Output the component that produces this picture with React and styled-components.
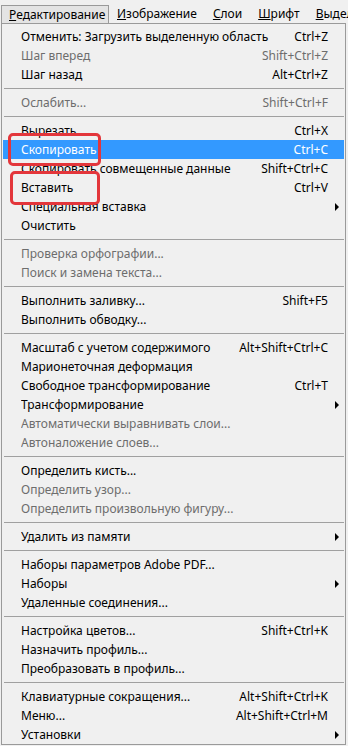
import React from 'react'
import styled, { createGlobalStyle } from 'styled-components'

const GlobalStyle = createGlobalStyle`
  body {
    margin: 0;
    background: #f0f0f0;
    font-family: "Noto Sans", "Open Sans", sans-serif;
    font-size: 12px;
    color: #000;
  }
`

const Page = styled.div`
  width: 348px;
  height: 746px;
  overflow: hidden;
  position: relative;
`

const MenuBar = styled.div`
  display: flex;
  align-items: flex-end;
  height: 23px;
  padding-left: 1px;
  white-space: nowrap;
  overflow: hidden;
`

const BarItem = styled.div`
  flex: none;
  height: 18px;
  line-height: 18px;
  padding: 0 8px;
  box-sizing: border-box;
  ${p => p.$open && `
    width: 108px;
    background: #e4e4e4;
    border: 1px solid #9a9a9a;
    border-bottom: none;
    line-height: 17px;
    padding: 0 7px;
  `}
`

const Panel = styled.div`
  position: relative;
  margin-left: 1px;
  width: 345px;
  box-sizing: border-box;
  border: 1px solid #9a9a9a;
  background: #f0f0f0;
  padding: 3px 0 0;
`

const Row = styled.div`
  display: grid;
  grid-template-columns: 1fr auto 16px;
  align-items: center;
  height: 19px;
  padding-left: 18px;
  margin: 0 1px;
  white-space: nowrap;
  color: ${p => (p.$active ? '#fff' : p.$disabled ? '#6d6d6d' : '#000')};
  background: ${p => (p.$active ? '#3399ff' : 'transparent')};
`

const Label = styled.span`
  overflow: hidden;
`

const Shortcut = styled.span`
  text-align: right;
`

const Arrow = styled.span`
  justify-self: center;
  width: 0;
  height: 0;
  border-top: 4px solid transparent;
  border-bottom: 4px solid transparent;
  border-left: 4px solid #000;
  margin-left: 1px;
`

const Separator = styled.div`
  height: 9px;
  display: flex;
  align-items: center;
  padding: 0 1px 0 2px;

  &::after {
    content: '';
    flex: 1;
    height: 1px;
    background: #a0a0a0;
  }
`

const Callout = styled.div`
  position: absolute;
  left: ${p => p.$x}px;
  top: ${p => p.$y}px;
  width: ${p => p.$w}px;
  height: ${p => p.$h}px;
  border: 3px solid #e3363b;
  border-radius: 5px;
  box-sizing: border-box;
`

const bar = ['Редактирование', 'Изображение', 'Слои', 'Шрифт', 'Выделение']

const items = [
  { t: 'Отменить: Загрузить выделенную область', k: 'Ctrl+Z' },
  { t: 'Шаг вперед', k: 'Shift+Ctrl+Z', off: true },
  { t: 'Шаг назад', k: 'Alt+Ctrl+Z' },
  '-',
  { t: 'Ослабить...', k: 'Shift+Ctrl+F', off: true },
  '-',
  { t: 'Вырезать', k: 'Ctrl+X' },
  { t: 'Скопировать', k: 'Ctrl+C', on: true },
  { t: 'Скопировать совмещенные данные', k: 'Shift+Ctrl+C' },
  { t: 'Вставить', k: 'Ctrl+V' },
  { t: 'Специальная вставка', sub: true },
  { t: 'Очистить' },
  '-',
  { t: 'Проверка орфографии...', off: true },
  { t: 'Поиск и замена текста...', off: true },
  '-',
  { t: 'Выполнить заливку...', k: 'Shift+F5' },
  { t: 'Выполнить обводку...' },
  '-',
  { t: 'Масштаб с учетом содержимого', k: 'Alt+Shift+Ctrl+C' },
  { t: 'Марионеточная деформация' },
  { t: 'Свободное трансформирование', k: 'Ctrl+T' },
  { t: 'Трансформирование', sub: true },
  { t: 'Автоматически выравнивать слои...', off: true },
  { t: 'Автоналожение слоев...', off: true },
  '-',
  { t: 'Определить кисть...' },
  { t: 'Определить узор...', off: true },
  { t: 'Определить произвольную фигуру...', off: true },
  '-',
  { t: 'Удалить из памяти', sub: true },
  '-',
  { t: 'Наборы параметров Adobe PDF...' },
  { t: 'Наборы', sub: true },
  { t: 'Удаленные соединения...' },
  '-',
  { t: 'Настройка цветов...', k: 'Shift+Ctrl+K' },
  { t: 'Назначить профиль...' },
  { t: 'Преобразовать в профиль...' },
  '-',
  { t: 'Клавиатурные сокращения...', k: 'Alt+Shift+Ctrl+K' },
  { t: 'Меню...', k: 'Alt+Shift+Ctrl+M' },
  { t: 'Установки', sub: true },
]

export default function App() {
  return (
    <Page>
      <GlobalStyle />
      <MenuBar>
        {bar.map((name, i) => (
          <BarItem key={name} $open={i === 0}>
            <u>{name[0]}</u>{name.slice(1)}
          </BarItem>
        ))}
      </MenuBar>
      <Panel>
        {items.map((it, i) =>
          it === '-' ? (
            <Separator key={i} />
          ) : (
            <Row key={i} $disabled={it.off} $active={it.on}>
              <Label>{it.t}</Label>
              <Shortcut>{it.k}</Shortcut>
              {it.sub ? <Arrow /> : <span />}
            </Row>
          )
        )}
        {/* red annotation frames */}
        <Callout $x={6} $y={109} $w={93} $h={33} />
        <Callout $x={8} $y={147} $w={90} $h={34} />
      </Panel>
    </Page>
  )
}
